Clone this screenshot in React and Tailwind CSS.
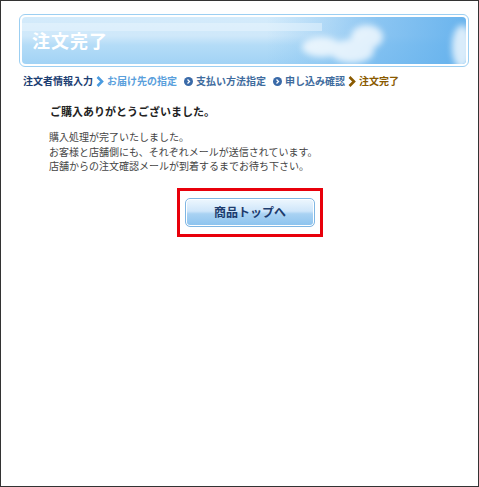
const jp = { fontFamily: '"Noto Sans CJK JP", "Noto Sans", sans-serif' };

function Chevron({ color }) {
  return (
    <svg width="8" height="11" viewBox="0 0 8 11" className="mx-[3px]">
      <path d="M1.5 1 L6 5.5 L1.5 10" fill="none" stroke={color} strokeWidth="2.6" strokeLinejoin="miter" />
    </svg>
  );
}

function Dot() {
  return (
    <svg width="9" height="9" viewBox="0 0 9 9" className="mr-[3px] ml-[7px]">
      <circle cx="4.5" cy="4.5" r="4.5" fill="#3a6aa8" />
      <path d="M3.5 2.5 L5.5 4.5 L3.5 6.5" fill="none" stroke="#fff" strokeWidth="1.3" />
    </svg>
  );
}

function Banner() {
  return (
    <div className="ml-[18px] w-[450px] h-[53px] rounded-[6px] border border-[#9ccff2] bg-white p-[2px]">
      <div className="relative h-full w-full overflow-hidden rounded-[4px] bg-[linear-gradient(180deg,#d4ebfb_0%,#cfe8fa_40%,#b4dcf7_60%,#a2d3f5_100%)]">
        <svg className="absolute inset-0" width="444" height="47" viewBox="0 0 444 47">
          <defs>
            <linearGradient id="sky" x1="0" x2="1" y1="0" y2="0">
              <stop offset="0" stopColor="#7fc0f0" stopOpacity="0" />
              <stop offset="0.55" stopColor="#7fc0f0" stopOpacity="0" />
              <stop offset="0.8" stopColor="#6cb5ee" stopOpacity="0.7" />
              <stop offset="1" stopColor="#5eaeec" stopOpacity="0.9" />
            </linearGradient>
            <filter id="blur" x="-20%" y="-20%" width="140%" height="140%">
              <feGaussianBlur stdDeviation="3" />
            </filter>
          </defs>
          <rect x="0" y="0" width="444" height="47" fill="url(#sky)" />
          <rect x="0" y="6" width="300" height="8" fill="#eaf5fd" opacity="0.5" />
          <g fill="#ffffff" filter="url(#blur)" opacity="0.75">
            <ellipse cx="345" cy="20" rx="16" ry="12" />
            <ellipse cx="330" cy="34" rx="22" ry="12" />
            <ellipse cx="300" cy="30" rx="20" ry="10" />
            <ellipse cx="440" cy="30" rx="10" ry="22" />
          </g>
        </svg>
        <div className="relative pl-[10px] pt-[12px] text-[18px] font-bold leading-[22px] tracking-[1px] text-white" style={jp}>
          注文完了
        </div>
      </div>
    </div>
  );
}

export default function App() {
  return (
    <div className="w-[479px] h-[487px] border border-[#333333] bg-white pt-[13px]" style={jp}>
      <Banner />

      <div className="mt-[7px] ml-[22px] flex items-center text-[10px] font-bold leading-[14px]">
        <span className="text-[#1c3e72]">注文者情報入力</span>
        <Chevron color="#4a9be0" />
        <span className="text-[#5aa0dc]">お届け先の指定</span>
        <Dot />
        <span className="text-[#3f6c9e]">支払い方法指定</span>
        <Dot />
        <span className="text-[#3f6c9e]">申し込み確認</span>
        <Chevron color="#8a5a00" />
        <span className="text-[#8a5a00]">注文完了</span>
      </div>

      <div className="ml-[49px] mt-[15px] text-[11px] font-bold leading-[16px] text-[#222222]">
        ご購入ありがとうございました。
      </div>

      <div className="ml-[48px] mt-[11px] text-[10px] leading-[14.5px] text-[#444444]">
        <p>購入処理が完了いたしました。</p>
        <p>お客様と店舗側にも、それぞれメールが送信されています。</p>
        <p>店舗からの注文確認メールが到着するまでお待ち下さい。</p>
      </div>

      <div className="mt-[14px] flex pl-[176px]">
        <div className="border-[3px] border-[#e8000b] px-[5px] py-[7px]">
          <button className="flex h-[29px] w-[130px] items-center justify-center rounded-[5px] border border-[#7fb6e3] bg-[linear-gradient(180deg,#eef7fe_0%,#cfe6fa_45%,#a9d2f3_55%,#8cc3ee_100%)] text-[12px] font-bold text-[#1d3c6e] shadow-[inset_0_0_0_1px_#ffffff]">
            商品トップへ
          </button>
        </div>
      </div>
    </div>
  );
}
